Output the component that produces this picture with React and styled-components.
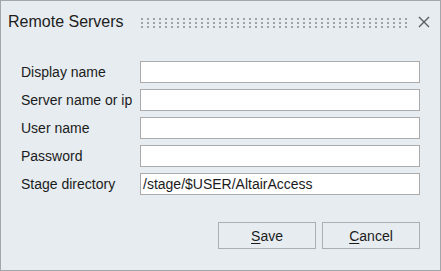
import React from "react";
import styled, { createGlobalStyle } from "styled-components";

const GlobalStyle = createGlobalStyle`
    body {
        margin: 0;
        font-family: "Liberation Sans", Arial, sans-serif;
    }
`;

const Window = styled.div`
    width: 441px;
    height: 271px;
    box-sizing: border-box;
    border: 1px solid #a3a7ab;
    background: #e6ecf0;
    display: flex;
    flex-direction: column;
    color: #1b1b1b;
`;

const Header = styled.div`
    height: 42px;
    display: flex;
    align-items: center;
    padding: 0 10px 0 7px;
`;

const Title = styled.div`
    font-size: 16px;
    color: #1d1d1d;
    white-space: nowrap;
`;

const Grip = styled.div`
    flex: 1;
    height: 10px;
    margin: 2px 11px 0 17px;
    background-image: radial-gradient(
        circle at 1px 1px,
        #a0a3a6 1.1px,
        transparent 1.5px
    );
    background-size: 6px 4px;
`;

const Close = styled.button`
    width: 12px;
    height: 12px;
    padding: 0;
    border: none;
    background: none;
    display: flex;
    cursor: pointer;
`;

const Form = styled.div`
    display: grid;
    grid-template-columns: 119px 280px;
    grid-auto-rows: 22px;
    row-gap: 6px;
    padding: 18px 0 0 20px;
`;

const Label = styled.label`
    font-size: 14px;
    display: flex;
    align-items: center;
    white-space: nowrap;
`;

const Input = styled.input`
    box-sizing: border-box;
    width: 280px;
    height: 22px;
    border: 1px solid #a9abad;
    background: #fff;
    padding: 0 2px;
    margin: 0;
    font-family: "Liberation Sans", Arial, sans-serif;
    font-size: 14px;
    color: #1b1b1b;
    outline: none;
`;

const Actions = styled.div`
    display: flex;
    justify-content: flex-end;
    gap: 6px;
    padding: 27px 20px 0 0;
`;

const Button = styled.button`
    box-sizing: border-box;
    width: 98px;
    height: 27px;
    border: 1px solid #acafb2;
    background: #e6ecf0;
    font-family: "Liberation Sans", Arial, sans-serif;
    font-size: 14px;
    color: #1b1b1b;
    padding: 0;
    cursor: pointer;

    u {
        text-decoration-thickness: 1px;
        text-underline-offset: 2px;
    }
`;

const fields = [
    { label: "Display name", value: "" },
    { label: "Server name or ip", value: "" },
    { label: "User name", value: "" },
    { label: "Password", value: "", type: "password" },
    { label: "Stage directory", value: "/stage/$USER/AltairAccess" },
];

const App = () => {
    return (
        <>
            <GlobalStyle />
            <Window>
                <Header>
                    <Title>Remote Servers</Title>
                    <Grip />
                    <Close aria-label="Close">
                        <svg width="12" height="12" viewBox="0 0 12 12">
                            <path
                                d="M1 1 L11 11 M11 1 L1 11"
                                stroke="#5a5d60"
                                strokeWidth="1.4"
                                fill="none"
                            />
                        </svg>
                    </Close>
                </Header>
                <Form>
                    {fields.map((field) => (
                        <React.Fragment key={field.label}>
                            <Label>{field.label}</Label>
                            <Input
                                type={field.type || "text"}
                                defaultValue={field.value}
                            />
                        </React.Fragment>
                    ))}
                </Form>
                <Actions>
                    <Button>
                        <u>S</u>ave
                    </Button>
                    <Button>
                        <u>C</u>ancel
                    </Button>
                </Actions>
            </Window>
        </>
    );
};

export default App;
